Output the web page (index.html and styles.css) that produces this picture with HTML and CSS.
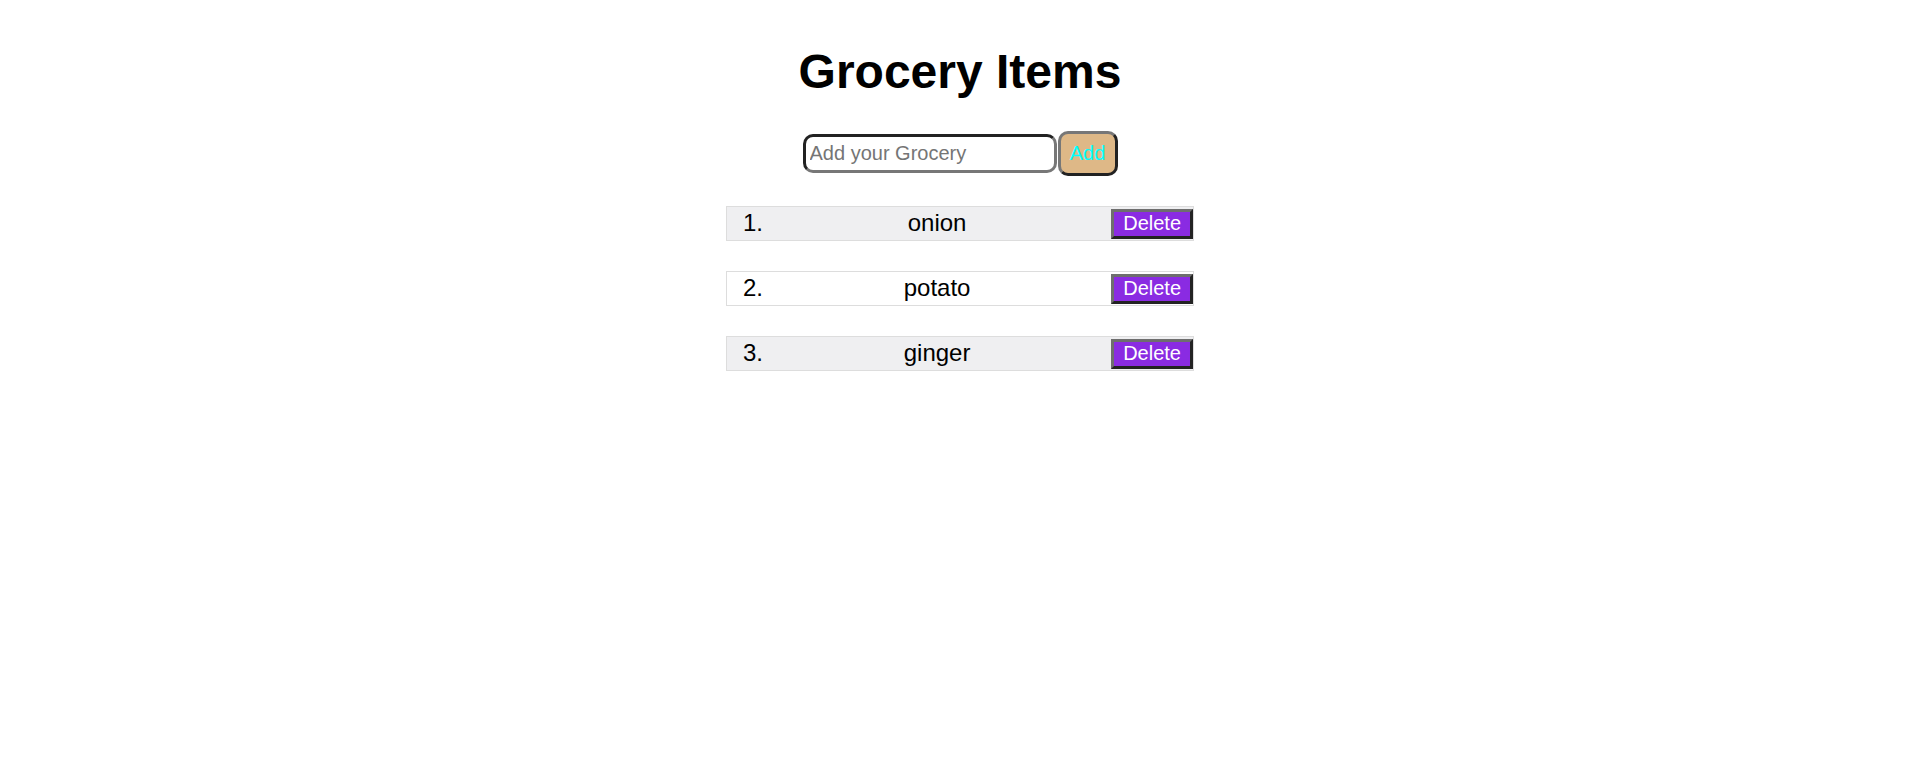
FILE: index.html
```html
<!DOCTYPE html>
<html lang="en">
<head>
<meta charset="utf-8">
<title>Grocery Items</title>
<link rel="stylesheet" href="styles.css">
</head>
<body>
<div class="app">
  <h1 class="title">Grocery Items</h1>
  <form class="add-form">
    <input class="add-input" type="text" placeholder="Add your Grocery">
    <button class="add-btn" type="button">Add</button>
  </form>
  <ul class="list">
    <li class="item item-alt"><span class="num">1.</span><span class="name">onion</span><button class="del-btn" type="button">Delete</button></li>
    <li class="item"><span class="num">2.</span><span class="name">potato</span><button class="del-btn" type="button">Delete</button></li>
    <li class="item item-alt"><span class="num">3.</span><span class="name">ginger</span><button class="del-btn" type="button">Delete</button></li>
  </ul>
</div>
</body>
</html>
```
FILE: styles.css
```css
html, body {
  margin: 0;
  padding: 0;
  background: #fff;
}
body {
  font-family: "Liberation Sans", Arial, sans-serif;
  color: #000;
}
.app {
  display: flex;
  flex-direction: column;
  align-items: center;
  padding-top: 44px;
}
.title {
  margin: 0;
  font-size: 48px;
  font-weight: bold;
  line-height: 55px;
}
.add-form {
  display: flex;
  align-items: center;
  gap: 1px;
  margin-top: 32px;
}
.add-input {
  box-sizing: border-box;
  width: 254px;
  height: 39px;
  padding: 0 4px;
  font-family: "Liberation Sans", Arial, sans-serif;
  font-size: 20px;
  border: 3px solid;
  border-color: #222 #777 #777 #222;
  border-radius: 10px;
  background: #fff;
  outline: none;
}
.add-input::placeholder {
  color: #757575;
}
.add-btn {
  box-sizing: border-box;
  width: 60px;
  height: 45px;
  padding: 0;
  font-family: "Liberation Sans", Arial, sans-serif;
  font-size: 20px;
  color: #0ff;
  background: #deb887;
  border: 3px solid;
  border-color: #777 #222 #222 #777;
  border-radius: 10px;
}
.list {
  list-style: none;
  margin: 30px 0 0;
  padding: 0;
  display: flex;
  flex-direction: column;
  gap: 30px;
}
.item {
  box-sizing: border-box;
  width: 468px;
  height: 35px;
  display: flex;
  align-items: center;
  justify-content: space-between;
  padding: 0 0 2px 16px;
  border: 1px solid #ddd;
  background: #fff;
  font-size: 24px;
}
.item-alt {
  background: #efeff1;
}
.del-btn {
  box-sizing: border-box;
  height: 30px;
  margin-top: 2px;
  padding: 0 9px;
  font-family: "Liberation Sans", Arial, sans-serif;
  font-size: 20px;
  color: #fff;
  background: #8a2be2;
  border: 3px solid;
  border-color: #6e6e6e #232323 #232323 #6e6e6e;
}
```
